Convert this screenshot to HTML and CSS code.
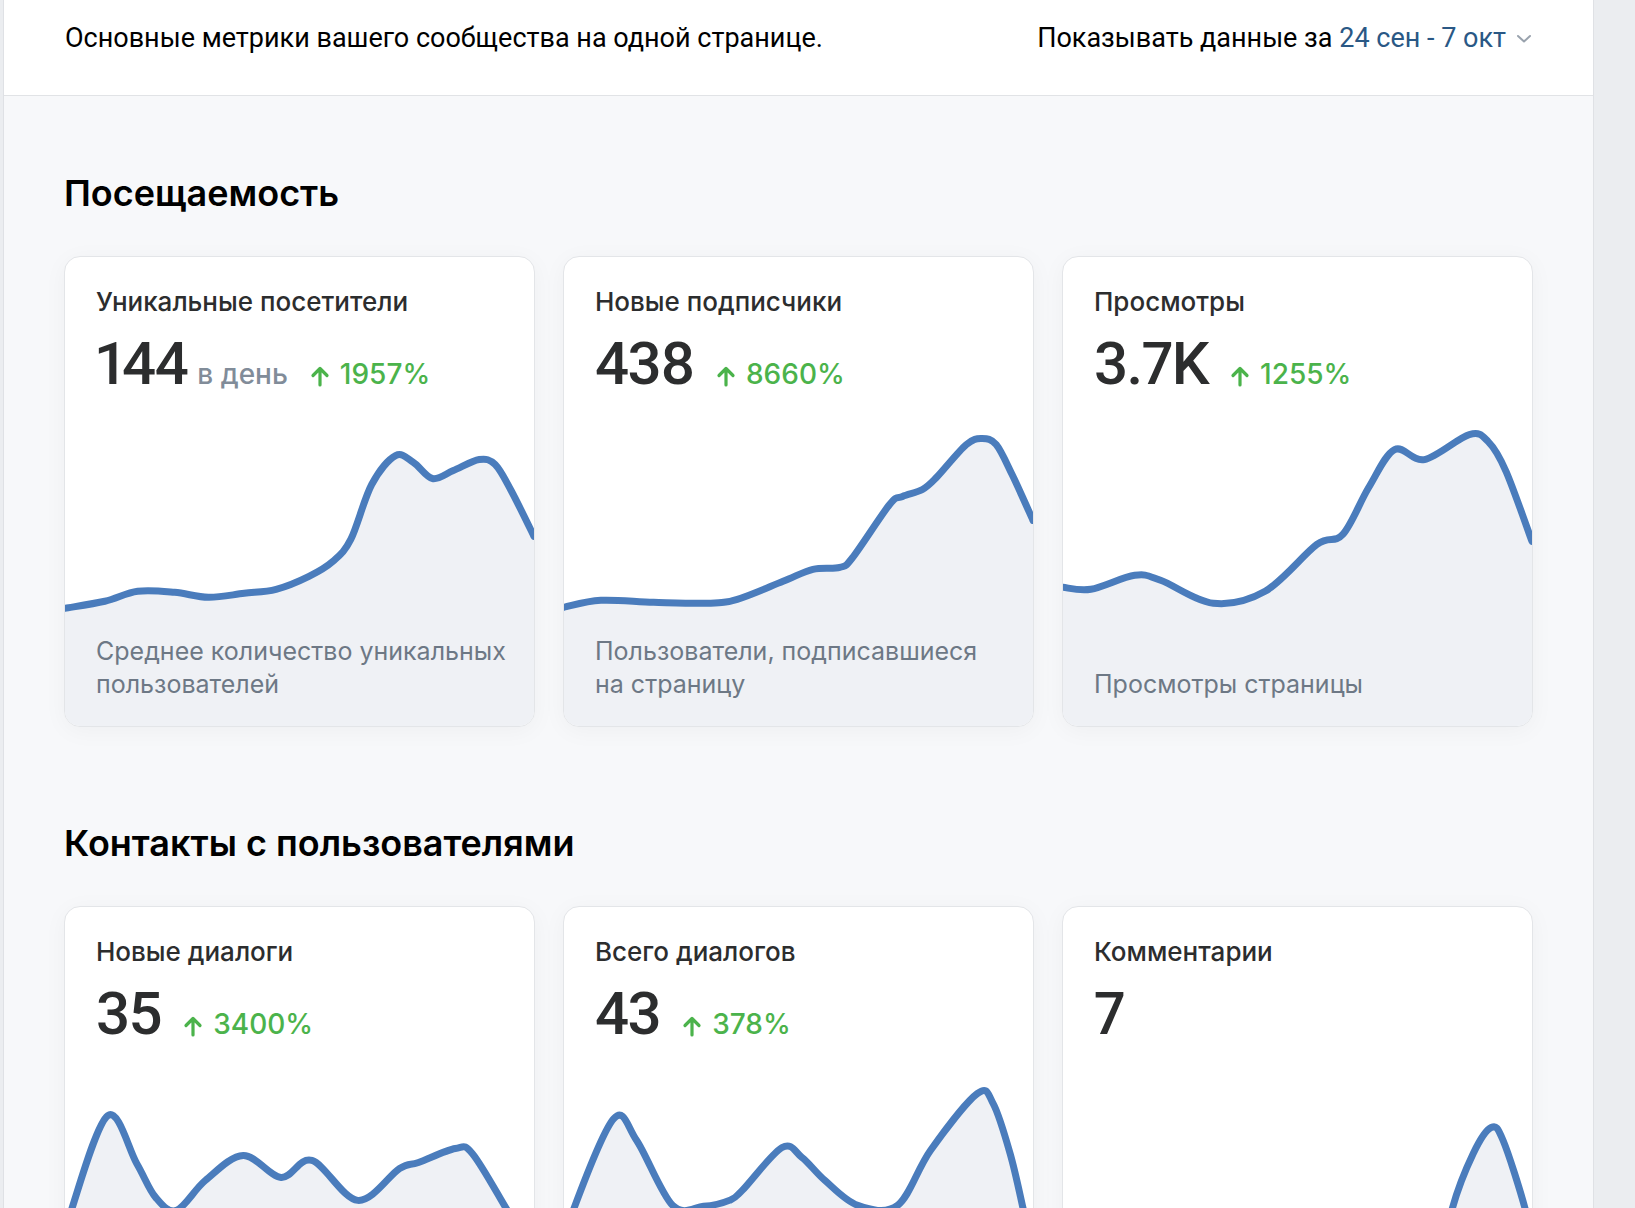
FILE: index.html
```html
<!DOCTYPE html>
<html lang="ru">
<head>
    <meta charset="UTF-8">
    <meta name="viewport" content="width=device-width, initial-scale=1.0">
    <title>Статистика сообщества</title>
    <link rel="stylesheet" href="styles.css">
    <script>
        document.addEventListener('DOMContentLoaded', () => {
            // points are in card pixels (471 x 470)
            const charts = {
                visitors: [[0,352],[40,345],[73,335],[110,336],[144,341],[180,337],[212,333],[245,320],[269,305],[287,283],[308,228],[332,199],[350,206],[369,222],[390,214],[416,203],[432,208],[448,234],[471,280]],
                subscribers: [[0,351],[37,344],[90,346],[144,347],[174,343],[220,325],[250,313],[277,311],[290,301],[327,248],[340,240],[360,233],[374,221],[404,188],[420,182],[434,188],[450,218],[471,264]],
                views: [[0,331],[28,333],[72,319],[98,324],[151,347],[203,335],[255,288],[281,278],[307,231],[333,193],[363,203],[408,178],[427,185],[445,215],[471,285]],
                newDialogs: [[0,340],[7,302],[43,209],[72,257],[91,291],[112,304],[141,274],[179,249],[217,271],[248,254],[294,294],[336,262],[355,256],[392,242],[409,247],[443,302],[471,350]],
                allDialogs: [[0,345],[10,302],[50,212],[73,234],[109,299],[140,300],[166,294],[179,284],[219,241],[239,251],[262,274],[295,299],[335,299],[368,244],[415,187],[431,197],[448,247],[461,302],[471,350]],
                comments: [[0,400],[150,400],[300,400],[370,398],[391,302],[412,247],[430,221],[442,234],[464,302],[471,340]]
            };

            const smoothPath = (pts) => {
                let d = `M${pts[0][0]},${pts[0][1]}`;
                for (let i = 0; i < pts.length - 1; i++) {
                    const p0 = pts[i - 1] || pts[i];
                    const p1 = pts[i];
                    const p2 = pts[i + 1];
                    const p3 = pts[i + 2] || p2;
                    const c1x = p1[0] + (p2[0] - p0[0]) / 6;
                    const c1y = p1[1] + (p2[1] - p0[1]) / 6;
                    const c2x = p2[0] - (p3[0] - p1[0]) / 6;
                    const c2y = p2[1] - (p3[1] - p1[1]) / 6;
                    d += ` C${c1x.toFixed(1)},${c1y.toFixed(1)} ${c2x.toFixed(1)},${c2y.toFixed(1)} ${p2[0]},${p2[1]}`;
                }
                return d;
            };

            document.querySelectorAll('.chart').forEach(svg => {
                const pts = charts[svg.dataset.chart];
                const line = smoothPath(pts);
                const last = pts[pts.length - 1];
                svg.querySelector('.chart-area').setAttribute('d', `${line} L${last[0]},470 L0,470 Z`);
                svg.querySelector('.chart-line').setAttribute('d', line);
            });
        });
    </script>
</head>
<body>
    <div class="page">
        <header class="top-bar">
            <p class="top-text">Основные метрики вашего сообщества на одной странице.</p>
            <p class="top-text">Показывать данные за <a class="period" href="#">24 сен - 7 окт</a>
                <svg class="chevron" width="16" height="10" viewBox="0 0 16 10"><path d="M2 2l6 5.5L14 2" fill="none" stroke="#99a2ad" stroke-width="2" stroke-linecap="round" stroke-linejoin="round"/></svg>
            </p>
        </header>

        <section class="section">
            <h2 class="section-title">Посещаемость</h2>
            <div class="cards">
                <div class="card">
                    <svg class="chart" data-chart="visitors" viewBox="0 0 471 470" preserveAspectRatio="none"><path class="chart-area"/><path class="chart-line"/></svg>
                    <div class="card-body">
                        <div class="card-title">Уникальные посетители</div>
                        <div class="card-value">
                            <span class="value-num">144</span>
                            <span class="value-unit">в день</span>
                            <span class="value-change"><svg class="arrow" width="20" height="22" viewBox="0 0 20 22"><path d="M10 20V3.5M3 10.5l7-7 7 7" fill="none" stroke="#4bb34b" stroke-width="3.2" stroke-linecap="round" stroke-linejoin="round"/></svg>1957%</span>
                        </div>
                        <div class="card-desc">Среднее количество уникальных пользователей</div>
                    </div>
                </div>

                <div class="card">
                    <svg class="chart" data-chart="subscribers" viewBox="0 0 471 470" preserveAspectRatio="none"><path class="chart-area"/><path class="chart-line"/></svg>
                    <div class="card-body">
                        <div class="card-title">Новые подписчики</div>
                        <div class="card-value">
                            <span class="value-num">438</span>
                            <span class="value-change"><svg class="arrow" width="20" height="22" viewBox="0 0 20 22"><path d="M10 20V3.5M3 10.5l7-7 7 7" fill="none" stroke="#4bb34b" stroke-width="3.2" stroke-linecap="round" stroke-linejoin="round"/></svg>8660%</span>
                        </div>
                        <div class="card-desc">Пользователи, подписавшиеся на страницу</div>
                    </div>
                </div>

                <div class="card">
                    <svg class="chart" data-chart="views" viewBox="0 0 471 470" preserveAspectRatio="none"><path class="chart-area"/><path class="chart-line"/></svg>
                    <div class="card-body">
                        <div class="card-title">Просмотры</div>
                        <div class="card-value">
                            <span class="value-num">3.7K</span>
                            <span class="value-change"><svg class="arrow" width="20" height="22" viewBox="0 0 20 22"><path d="M10 20V3.5M3 10.5l7-7 7 7" fill="none" stroke="#4bb34b" stroke-width="3.2" stroke-linecap="round" stroke-linejoin="round"/></svg>1255%</span>
                        </div>
                        <div class="card-desc">Просмотры страницы</div>
                    </div>
                </div>
            </div>
        </section>

        <section class="section">
            <h2 class="section-title">Контакты с пользователями</h2>
            <div class="cards">
                <div class="card">
                    <svg class="chart" data-chart="newDialogs" viewBox="0 0 471 470" preserveAspectRatio="none"><path class="chart-area"/><path class="chart-line"/></svg>
                    <div class="card-body">
                        <div class="card-title">Новые диалоги</div>
                        <div class="card-value">
                            <span class="value-num">35</span>
                            <span class="value-change"><svg class="arrow" width="20" height="22" viewBox="0 0 20 22"><path d="M10 20V3.5M3 10.5l7-7 7 7" fill="none" stroke="#4bb34b" stroke-width="3.2" stroke-linecap="round" stroke-linejoin="round"/></svg>3400%</span>
                        </div>
                    </div>
                </div>

                <div class="card">
                    <svg class="chart" data-chart="allDialogs" viewBox="0 0 471 470" preserveAspectRatio="none"><path class="chart-area"/><path class="chart-line"/></svg>
                    <div class="card-body">
                        <div class="card-title">Всего диалогов</div>
                        <div class="card-value">
                            <span class="value-num">43</span>
                            <span class="value-change"><svg class="arrow" width="20" height="22" viewBox="0 0 20 22"><path d="M10 20V3.5M3 10.5l7-7 7 7" fill="none" stroke="#4bb34b" stroke-width="3.2" stroke-linecap="round" stroke-linejoin="round"/></svg>378%</span>
                        </div>
                    </div>
                </div>

                <div class="card">
                    <svg class="chart" data-chart="comments" viewBox="0 0 471 470" preserveAspectRatio="none"><path class="chart-area"/><path class="chart-line"/></svg>
                    <div class="card-body">
                        <div class="card-title">Комментарии</div>
                        <div class="card-value">
                            <span class="value-num">7</span>
                        </div>
                    </div>
                </div>
            </div>
        </section>
    </div>
</body>
</html>
```

FILE: styles.css
```css
body {
    margin: 0;
    background-color: #ebedf0;
    font-family: Inter, Roboto, sans-serif;
    color: #000;
}

.page {
    width: 1589px;
    min-height: 1208px;
    margin-left: 3px;
    background-color: #f7f8fa;
    border-left: 1px solid #dfe1e5;
    border-right: 1px solid #dfe1e5;
}

.top-bar {
    display: flex;
    justify-content: space-between;
    align-items: flex-start;
    height: 96px;
    box-sizing: border-box;
    padding: 22px 61px 0 61px;
    background-color: #fff;
    border-bottom: 1px solid #e1e3e6;
}

.top-text {
    margin: 0;
    font-family: Roboto, sans-serif;
    font-size: 27px;
    line-height: 32px;
    display: flex;
    align-items: center;
    white-space: pre;
}

.period {
    color: #2a5885;
    text-decoration: none;
}

.chevron {
    margin-left: 10px;
    margin-top: 2px;
}

.section {
    padding: 0 60px 19px;
}

.section-title {
    margin: 74px 0 40px;
    font-size: 36px;
    line-height: 46px;
    font-weight: 600;
    color: #000;
}

.cards {
    display: grid;
    grid-template-columns: repeat(3, 1fr);
    gap: 28px;
}

.card {
    display: grid;
    height: 471px;
    box-sizing: border-box;
    background-color: #fff;
    border: 1px solid #e3e5e8;
    border-radius: 16px;
    overflow: hidden;
    box-shadow: 0 4px 24px rgba(0, 0, 0, 0.04);
}

.chart,
.card-body {
    grid-area: 1 / 1;
}

.chart {
    width: 100%;
    height: 100%;
}

.chart-area {
    fill: #eff1f5;
}

.chart-line {
    fill: none;
    stroke: #4a7cbc;
    stroke-width: 7;
    stroke-linecap: round;
    stroke-linejoin: round;
    vector-effect: non-scaling-stroke;
}

.card-body {
    position: relative;
    display: flex;
    flex-direction: column;
    padding: 29px 24px 25px 31px;
}

.card-title {
    font-size: 26px;
    line-height: 32px;
    font-weight: 500;
    color: #2c2d2e;
}

.card-value {
    display: flex;
    align-items: baseline;
    margin-top: 14px;
}

.value-num {
    font-family: Roboto, sans-serif;
    font-size: 60px;
    line-height: 64px;
    font-weight: 500;
    color: #2c2d2e;
    letter-spacing: -1.5px;
    font-variant-numeric: proportional-nums;
}

.value-unit {
    margin-left: 10px;
    font-size: 28px;
    font-weight: 500;
    color: #818c99;
}

.value-change {
    display: inline-flex;
    align-items: baseline;
    gap: 10px;
    margin-left: 22px;
    font-size: 28px;
    font-weight: 500;
    color: #4bb34b;
}

.arrow {
    align-self: center;
    margin-top: 4px;
}

.card-desc {
    margin-top: auto;
    font-size: 25px;
    line-height: 33px;
    color: #6d7885;
}
```
